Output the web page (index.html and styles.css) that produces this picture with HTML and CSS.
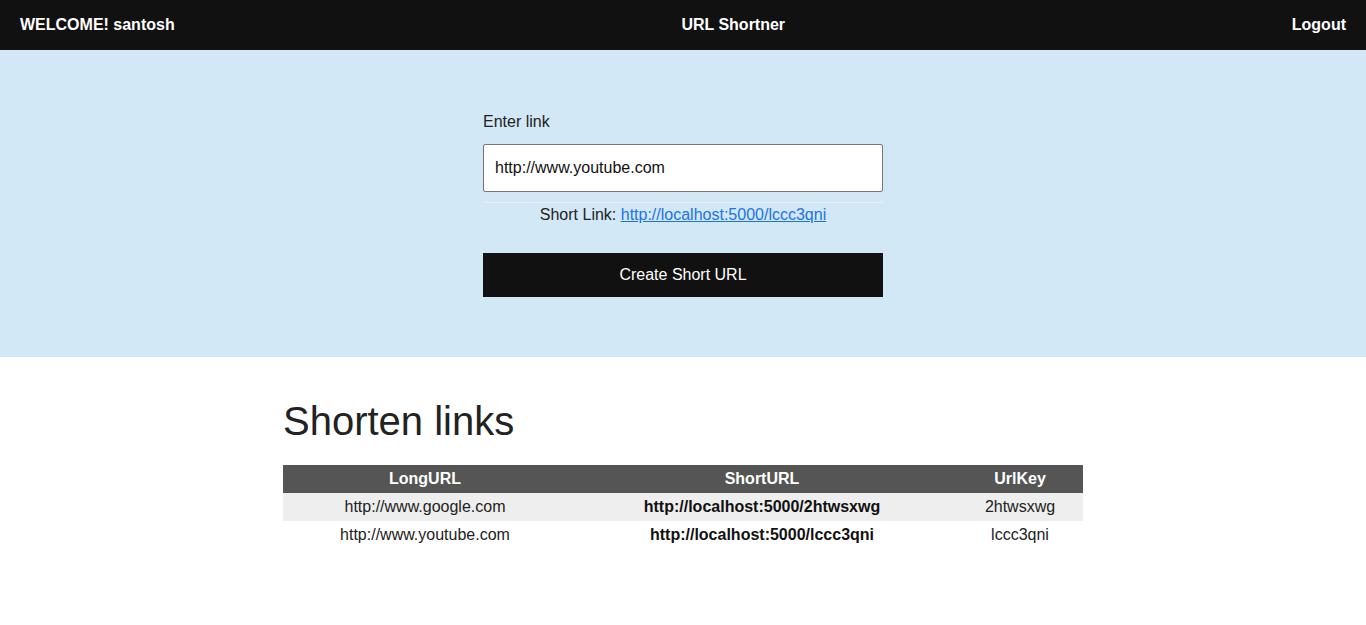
FILE: index.html
```html
<!DOCTYPE html>
<html>
<head>
<meta charset="utf-8">
<link rel="stylesheet" href="styles.css">
</head>
<body>
<nav class="nav">
  <span class="nav-item">WELCOME! santosh</span>
  <span class="nav-item">URL Shortner</span>
  <span class="nav-item">Logout</span>
</nav>
<section class="hero">
  <form class="form">
    <label class="label">Enter link</label>
    <input class="input" type="text" value="http://www.youtube.com">
    <hr class="rule">
    <p class="short">Short Link: <a href="#">http://localhost:5000/lccc3qni</a></p>
    <button class="btn" type="button">Create Short URL</button>
  </form>
</section>
<section class="list">
  <h1 class="title">Shorten links</h1>
  <table class="table">
    <colgroup><col class="c1"><col class="c2"><col class="c3"></colgroup>
    <thead>
      <tr><th>LongURL</th><th>ShortURL</th><th>UrlKey</th></tr>
    </thead>
    <tbody>
      <tr><td>http://www.google.com</td><td class="b">http://localhost:5000/2htwsxwg</td><td>2htwsxwg</td></tr>
      <tr><td>http://www.youtube.com</td><td class="b">http://localhost:5000/lccc3qni</td><td>lccc3qni</td></tr>
    </tbody>
  </table>
</section>
</body>
</html>
```
FILE: styles.css
```css
* { box-sizing: border-box; }
body {
  margin: 0;
  font-family: "Liberation Sans", Arial, sans-serif;
  font-size: 16px;
  color: #222;
  background: #fff;
}
.nav {
  height: 50px;
  background: #111;
  display: flex;
  justify-content: space-between;
  align-items: center;
  padding: 0 20px;
}
.nav-item {
  color: #fff;
  font-weight: bold;
  font-size: 16px;
}
.hero {
  background: #d3e8f7;
  height: 307px;
  display: flex;
  justify-content: center;
  padding-top: 61px;
}
.form {
  width: 400px;
  display: flex;
  flex-direction: column;
}
.label {
  font-size: 16px;
  line-height: 22px;
  color: #222;
}
.input {
  margin-top: 11px;
  height: 48px;
  border: 1px solid #767676;
  border-radius: 2px;
  padding: 0 11px;
  font-family: "Liberation Sans", Arial, sans-serif;
  font-size: 16px;
  color: #111;
  background: #fff;
}
.rule {
  margin: 10px 0 0;
  border: 0;
  border-top: 1px solid #e8eef2;
}
.short {
  margin: 2px 0 0;
  text-align: center;
  line-height: 20px;
  color: #222;
}
.short a { color: #1a73e8; }
.btn {
  margin-top: 28px;
  height: 44px;
  border: 0;
  background: #111;
  color: #fff;
  font-family: "Liberation Sans", Arial, sans-serif;
  font-size: 16px;
}
.list {
  width: 800px;
  margin: 0 auto;
  padding-top: 39px;
}
.title {
  margin: 0;
  font-size: 40px;
  font-weight: normal;
  line-height: 50px;
  color: #222;
}
.table {
  margin-top: 19px;
  width: 800px;
  border-collapse: collapse;
  table-layout: fixed;
}
.c1 { width: 284px; }
.c2 { width: 390px; }
.c3 { width: 126px; }
.table th {
  background: #555;
  color: #fff;
  font-weight: bold;
  height: 28px;
  padding: 0;
}
.table td {
  height: 28px;
  padding: 0;
  text-align: center;
  color: #222;
}
.table td.b { font-weight: bold; color: #111; }
.table tbody tr:nth-child(odd) { background: #eee; }
```
